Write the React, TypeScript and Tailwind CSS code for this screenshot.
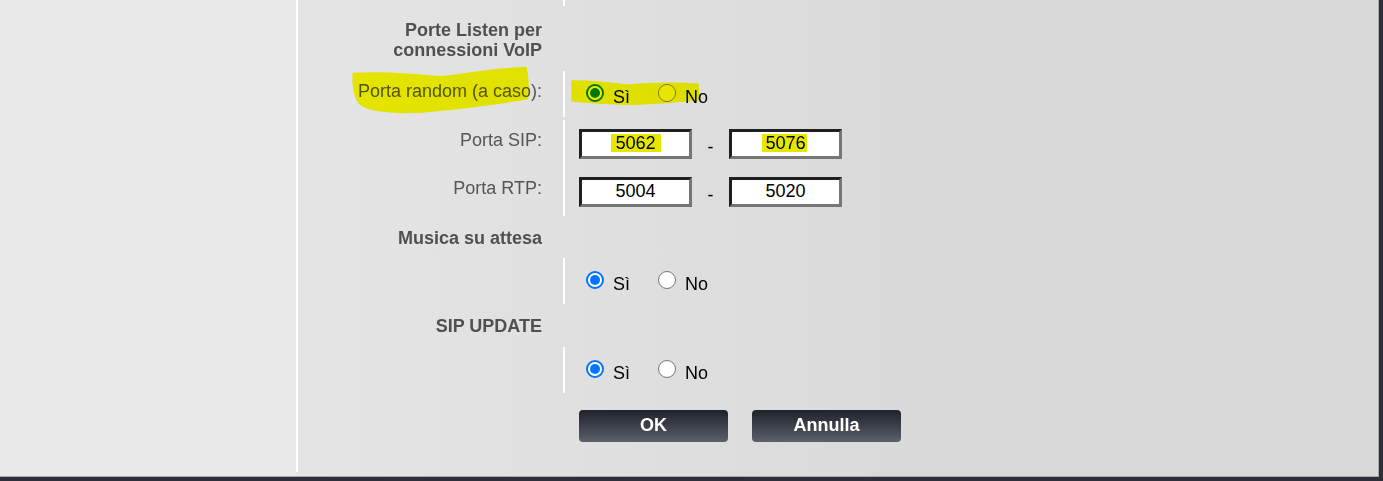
import React from "react";

// highlighter strokes painted over the screenshot
function Blob({ d, className }: { d: string; className: string }) {
  return (
    <svg className={"absolute pointer-events-none mix-blend-darken " + className} viewBox="0 0 200 60" preserveAspectRatio="none">
      <path d={d} fill="#e6e600" />
    </svg>
  );
}

function Radio({ checked }: { checked?: boolean }) {
  if (checked) {
    return (
      <span className="flex h-[18px] w-[18px] shrink-0 items-center justify-center rounded-full border-2 border-[#0075ff] bg-white">
        <span className="h-[10px] w-[10px] rounded-full bg-[#0075ff]" />
      </span>
    );
  }
  return <span className="block h-[18px] w-[18px] shrink-0 rounded-full border border-[#767676] bg-white" />;
}

function YesNo() {
  return (
    <div className="flex items-start pl-[21px] pt-[13px] text-[18px] leading-[20px] text-black">
      <Radio checked />
      <span className="ml-[9px] mt-[3px]">Sì</span>
      <span className="ml-[28px]">
        <Radio />
      </span>
      <span className="ml-[9px] mt-[3px]">No</span>
    </div>
  );
}

function PortBox({ value, mark }: { value: string; mark?: string }) {
  return (
    <div className="relative flex h-[30px] w-[113px] items-center justify-center border-[3px] border-t-[#1f1f1f] border-l-[#1f1f1f] border-b-[#767676] border-r-[#767676] bg-white pb-[3px] text-[18px] leading-none text-black">
      {value}
      {mark && <span className={"absolute top-[2px] h-[18px] bg-[#e6e600] mix-blend-darken " + mark} />}
    </div>
  );
}

function Ports({ from, to, marks }: { from: string; to: string; marks?: boolean }) {
  return (
    <div className="flex items-center pl-[14px] pt-[9px]">
      <PortBox value={from} mark={marks ? "left-[29px] w-[50px]" : undefined} />
      <span className="w-[37px] pt-[5px] text-center text-[18px] leading-none text-black">-</span>
      <PortBox value={to} mark={marks ? "left-[30px] w-[45px]" : undefined} />
    </div>
  );
}

const label = "pr-[21px] pt-[10px] text-right text-[18px] leading-[20px] text-[#555]";
const title = "pr-[21px] text-right text-[18px] font-bold leading-[20px] text-[#505050]";
const sep = "border-l-2 border-white";

export default function App() {
  return (
    <div className="h-[481px] w-[1383px] bg-[#2e2e3b] pb-[4px] pr-[4px] font-['Liberation_Sans',Arial,sans-serif]">
      <div className="flex h-[477px] border-b border-r border-[#a9a9a9] bg-[#e6e6e6]">
        <div className="w-[296px] shrink-0 bg-[#e9e9e9]" />
        <div className="h-[472px] w-[2px] shrink-0 bg-white" />
        <main className="flex-1 bg-linear-to-r from-[#e5e5e5] to-[#d9d9d9] to-60%">
          <div className="grid h-[6px] grid-cols-[265px_1fr]">
            <div />
            <div className={sep} />
          </div>

          <div className="mb-[11px] mt-[14px] grid grid-cols-[265px_1fr]">
            <div className={title}>
              Porte Listen per
              <br />
              connessioni VoIP
            </div>
            <div />
          </div>

          <div className="relative grid h-[46px] grid-cols-[265px_1fr]">
            <div className={label}>Porta random (a caso):</div>
            <div className={"relative " + sep}>
              <YesNo />
              <Blob
                className="left-[5px] top-[8px] h-[27px] w-[130px]"
                d="M2,3 C40,2 70,10 90,12 C120,8 160,6 198,10 C199,25 199,38 198,48 C160,52 120,58 90,58 C60,57 30,54 2,50 Z"
              />
            </div>
            <Blob
              className="left-[52px] top-[-5px] h-[50px] w-[180px]"
              d="M3,8 C35,6 70,9 100,12 C130,9 160,2 196,1 C199,12 199,28 198,40 C165,46 125,52 80,56 C45,58 20,55 10,46 C3,36 2,20 3,8 Z"
            />
          </div>

          <div className="mt-[3px] grid h-[48px] grid-cols-[265px_1fr]">
            <div className={label}>Porta SIP:</div>
            <div className={sep}>
              <Ports from="5062" to="5076" marks />
            </div>
          </div>
          <div className="grid h-[48px] grid-cols-[265px_1fr]">
            <div className={label}>Porta RTP:</div>
            <div className={sep}>
              <Ports from="5004" to="5020" />
            </div>
          </div>

          <div className="mb-[10px] mt-[12px] grid grid-cols-[265px_1fr]">
            <div className={title}>Musica su attesa</div>
            <div />
          </div>
          <div className="grid h-[46px] grid-cols-[265px_1fr]">
            <div />
            <div className={sep}>
              <YesNo />
            </div>
          </div>

          <div className="mb-[11px] mt-[12px] grid grid-cols-[265px_1fr]">
            <div className={title}>SIP UPDATE</div>
            <div />
          </div>
          <div className="grid h-[46px] grid-cols-[265px_1fr]">
            <div />
            <div className={sep}>
              <YesNo />
            </div>
          </div>

          <div className="mt-[17px] grid grid-cols-[265px_1fr]">
            <div />
            <div className="flex gap-[24px] pl-[16px]">
              <button className="h-[32px] w-[149px] rounded-[4px] bg-linear-to-b from-[#20232c] to-[#5b606a] pb-[2px] text-[18px] font-bold text-white">
                OK
              </button>
              <button className="h-[32px] w-[149px] rounded-[4px] bg-linear-to-b from-[#20232c] to-[#5b606a] pb-[2px] text-[18px] font-bold text-white">
                Annulla
              </button>
            </div>
          </div>
        </main>
      </div>
    </div>
  );
}
